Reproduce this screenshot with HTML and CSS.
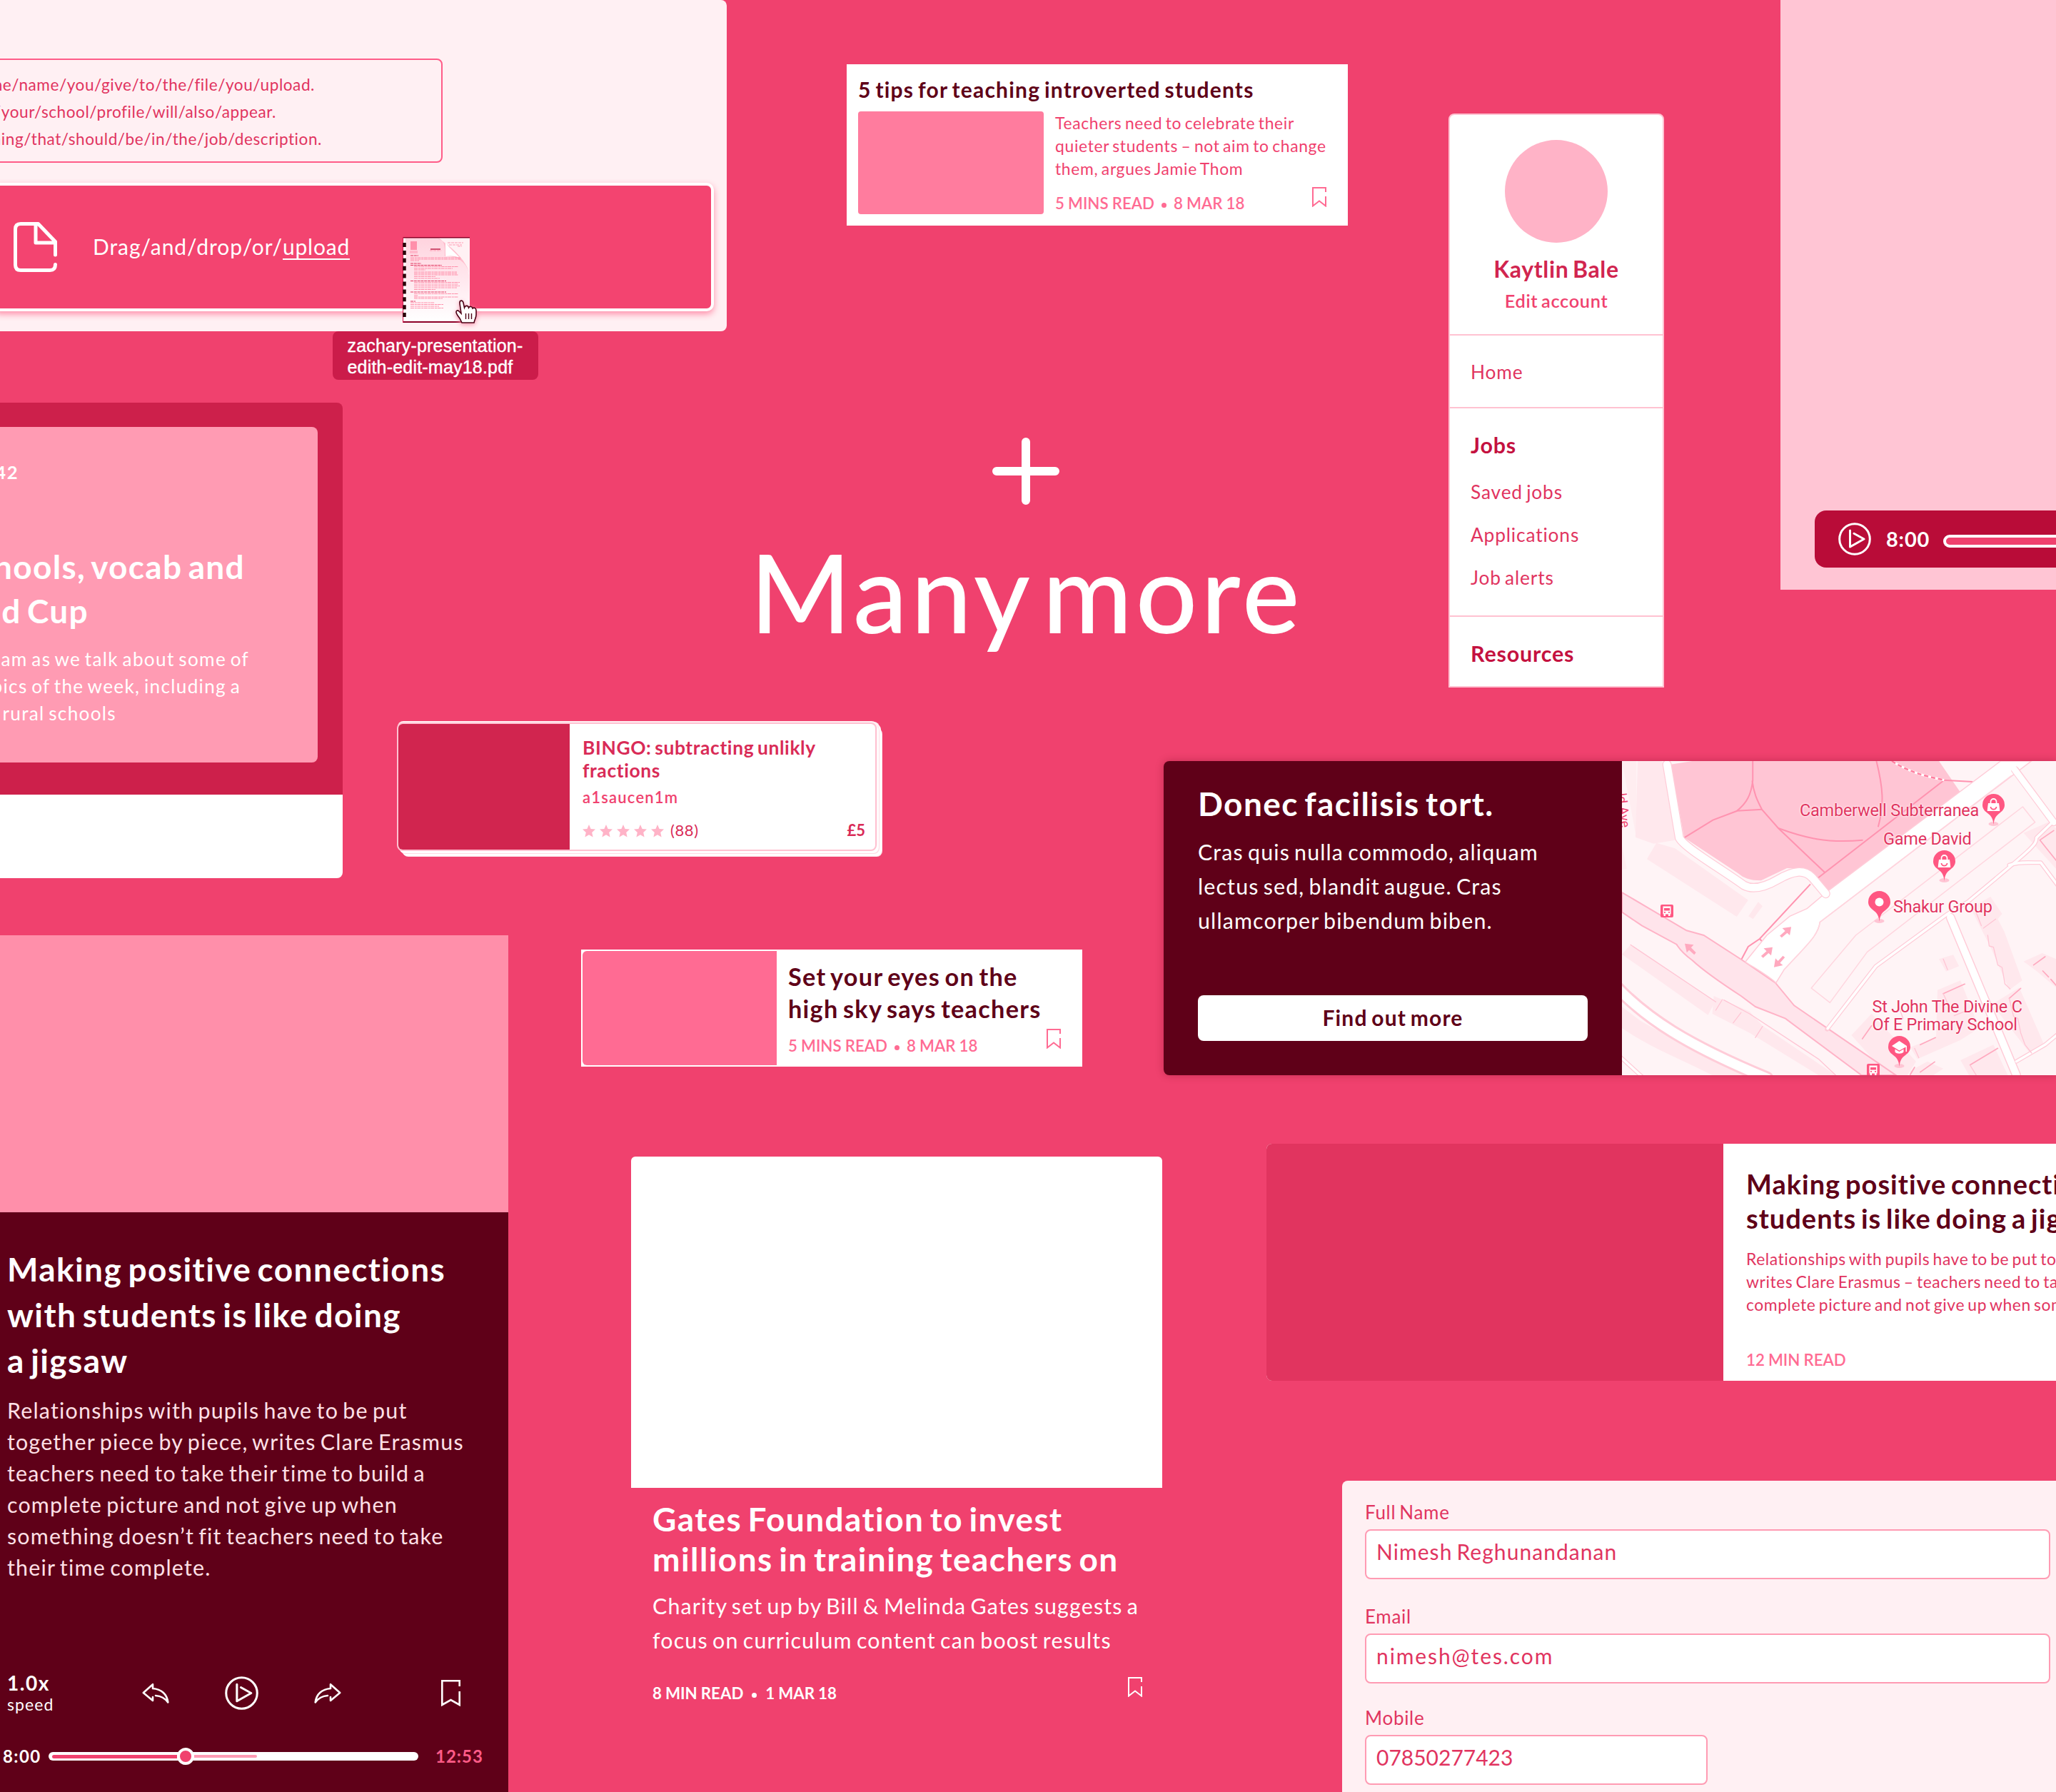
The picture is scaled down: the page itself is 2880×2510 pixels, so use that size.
FILE: index.html
```html
<!DOCTYPE html>
<html lang="en">
<head>
<meta charset="utf-8">
<title>Many more</title>
<link rel="stylesheet" href="styles.css">
</head>
<body>
<svg class="defs" aria-hidden="true">
  <symbol id="bookmark" viewBox="0 0 20 28"><path d="M19 7V1H1V26.5L10 19.5L19 26.5V13" fill="none" stroke="currentColor" stroke-width="2"/></symbol>
  <symbol id="play" viewBox="0 0 46 46"><circle cx="23" cy="23" r="21.3" fill="none" stroke="currentColor" stroke-width="3"/><path d="M16.5 11V34L36 23L22 15.2" fill="none" stroke="currentColor" stroke-width="3" stroke-linejoin="round" stroke-linecap="round"/></symbol>
  <symbol id="reply" viewBox="0 0 38 30"><path d="M15 20V25L1.8 14L15 2.2V8C27 9 35 16 36.3 27.500C32 21.500 26 18.500 19 18" fill="none" stroke="currentColor" stroke-width="2.6" stroke-linejoin="round" stroke-linecap="round"/></symbol>
  <symbol id="star" viewBox="0 0 18 18"><path d="M9 0l2.600 6 6.400.6-4.800 4.300L14.600 17.500 9 14.200 3.400 17.500 4.800 10.900 0 6.600 6.400 6z" fill="currentColor"/></symbol>
  <symbol id="pin" viewBox="0 0 31 46"><ellipse cx="15.500" cy="42" rx="7" ry="3" fill="#ffc5d4"/><path d="M15.500 43C14.500 33 11.500 30.500 6.500 26.500C2.500 23.500 0 20 0 15.500a15.500 15.500 0 0 1 31 0C31 20 28.500 23.500 24.500 26.500C19.500 30.500 16.500 33 15.500 43z" fill="#ff5782"/></symbol>
  <symbol id="bag" viewBox="0 0 18 18"><path d="M1.500 7h15L18 18H0z" fill="#fff"/><path d="M5 8V5a4 4 0 0 1 8 0v3" fill="none" stroke="#fff" stroke-width="1.800"/><path d="M5 12a4 3.600 0 0 0 8 0" fill="none" stroke="#ff5782" stroke-width="1.800"/></symbol>
  <symbol id="bus" viewBox="0 0 18 18"><rect width="18" height="18" rx="2" fill="#ff5782"/><path d="M3.500 2.500h11v11h-11z M4.500 13h2.500v3h-2.500z M11 13h2.500v3H11z" fill="#fff"/><path d="M5 5h8v3.500H5z M5 10h2v1.800H5z M11 10h2v1.800h-2z" fill="#ff5782"/></symbol>
</svg>

<main class="canvas">

  <section class="upload">
    <div class="upload-help">
      <p class="help-line help-line-a">he/name/you/give/to/the/file/you/upload.</p>
      <p class="help-line help-line-b">/your/school/profile/will/also/appear.</p>
      <p class="help-line help-line-c">hing/that/should/be/in/the/job/description.</p>
    </div>
    <div class="dropzone">
      <svg class="file-icon" viewBox="0 0 61 70"><path d="M58.500 46V27.500L34.500 2.500H10Q2.500 2.500 2.500 10V60Q2.500 67.500 10 67.500H51Q58.500 67.500 58.500 59.500M31 3V29H58.500" fill="none" stroke="#fff" stroke-width="5" stroke-linejoin="round" stroke-linecap="round"/></svg>
      <p class="drop-text">Drag/and/drop/or/<span class="drop-link">upload</span></p>
    </div>
  </section>

  <svg class="document" viewBox="0 0 94 120">
    <defs><linearGradient id="sheet" x1="0" y1="0" x2="0" y2="1"><stop offset="0" stop-color="#ffd3de"/><stop offset=".55" stop-color="#ffeaf0"/><stop offset="1" stop-color="#fff"/></linearGradient></defs>
    <path d="M0 0h94v120H0z" fill="#fff1f4"/>
    <path d="M4 1H48C58 3 60 12 60 27C76 27 90 34 93 54V118H4z" fill="url(#sheet)"/>
    <path d="M48 1C59 4 60 14 59 27C76 26 88 34 93 50C90 34 68 12 48 1z" fill="#ff9bb3" opacity=".6"/>
    <path d="M60 27V8C66 16 74 22 80 29C74 26 66 26 60 27z" fill="#fff"/>
    <path d="M11 6h9v12h-9z" fill="#ff8faa"/><path d="M10 19h11v4H10z" fill="#ffb9cb"/>
    <path d="M0 .5H94M0 119h94" stroke="#8d0027" stroke-width="2"/>
    <path d="M.5 0V120" stroke="#d91c50" stroke-width="1"/>
    <path d="M3 7V116" stroke="#fff" stroke-width="3"/>
    <path d="M2.500 8V116" stroke="#2a0008" stroke-width="4.500" stroke-dasharray="6 4.900"/>
    <path d="M63 8h22M65 11h18M77 13h6M38 19h16" stroke="#ff9bb3" stroke-width="1.200" stroke-dasharray="4 1"/>
    <path d="M39 17h14" stroke="#b90c38" stroke-width="1.300"/>
    <path d="M11 26h11M11 37h15M11 39.500h44M11 61.500h50M11 77h50M11 90h7" stroke="#e1345f" stroke-width="1" stroke-dasharray="4 .8"/>
    <path d="M11 29h70M11 31h70M11 33h12M16 41.500h62M16 44h54M16 46h16M16 49h60M16 51h60M16 53h62M16 55.500h30M16 58h36M16 63.500h64M16 66h62M16 68.500h64M16 71h60M16 73.500h30M16 79.500h62M16 82h6M16 84h62M16 86h40M11 92h34M11 94.500h46M11 97h40M11 99.500h46" stroke="#ff8faa" stroke-width="1" stroke-dasharray="5 .8 3 .6"/>
  </svg>
  <svg class="cursor" viewBox="0 0 30 33"><path d="M9 32L6 26C4 23 1 20 1 17c0-2 2-3 4-1L8 19 6 5C5.500 0 10 0 11 4L12.500 11C14 7 18 8 18.500 11C20 8.500 23.500 9 24 12C26.500 10 29 12 29 15V21C29 25 27 27 26 32z" fill="#fff" stroke="#4a0014" stroke-width="1.600"/><path d="M14.500 19v8M18.500 19v8M22.500 19v8" stroke="#4a0014" stroke-width="1.400"/></svg>
  <div class="file-label">zachary-presentation-<br>edith-edit-may18.pdf</div>

  <article class="tips">
    <h2 class="tips-title">5 tips for teaching introverted students</h2>
    <div class="tips-row">
      <div class="tips-thumb"></div>
      <div class="tips-body">
        <p class="small-copy tips-copy">Teachers need to celebrate their<br>quieter students – not aim to change<br>them, argues Jamie Thom</p>
        <div class="card-foot tips-foot">
          <p class="meta"><span>5 MINS READ</span><i class="dot"></i><span>8 MAR 18</span></p>
          <svg class="bookmark tips-bookmark"><use href="#bookmark"/></svg>
        </div>
      </div>
    </div>
  </article>

  <nav class="sidebar">
    <header class="profile">
      <div class="avatar"></div>
      <p class="profile-name">Kaytlin Bale</p>
      <p class="profile-edit">Edit account</p>
    </header>
    <div class="nav-group nav-home"><p class="nav-item nav-item-home">Home</p></div>
    <div class="nav-group nav-jobs">
      <h3 class="nav-title">Jobs</h3>
      <div class="nav-list"><p class="nav-item">Saved jobs</p><p class="nav-item">Applications</p><p class="nav-item">Job alerts</p></div>
    </div>
    <div class="nav-group nav-last"><h3 class="nav-title">Resources</h3></div>
  </nav>

  <section class="video">
    <div class="video-bar">
      <svg class="video-play"><use href="#play"/></svg>
      <span class="video-time">8:00</span>
      <div class="video-track"></div>
    </div>
  </section>

  <section class="podcast">
    <div class="podcast-inner">
      <p class="cut episode">42</p>
      <div class="podcast-title"><p class="cut pt-a">hools, vocab and</p><p class="cut pt-b">d Cup</p></div>
      <div class="podcast-copy"><p class="cut pc-a">am as we talk about some of</p><p class="cut pc-b">pics of the week, including a</p><p class="cut pc-c">rural schools</p></div>
    </div>
  </section>

  <section class="hero">
    <svg class="plus" viewBox="0 0 94 94"><path d="M47 6V88M6 47H88" stroke="#fff" stroke-width="12" stroke-linecap="round"/></svg>
    <h1 class="hero-title">Many more</h1>
  </section>

  <article class="bingo">
    <div class="bingo-image"></div>
    <div class="bingo-body">
      <h2 class="bingo-title">BINGO: subtracting unlikly<br>fractions</h2>
      <p class="bingo-author">a1saucen1m</p>
      <div class="bingo-foot">
        <div class="stars"><svg><use href="#star"/></svg><svg><use href="#star"/></svg><svg><use href="#star"/></svg><svg><use href="#star"/></svg><svg><use href="#star"/></svg></div>
        <span class="reviews">(88)</span>
        <span class="price">£5</span>
      </div>
    </div>
  </article>

  <article class="sky">
    <div class="sky-image"></div>
    <div class="sky-body">
      <h2 class="sky-title">Set your eyes on the<br>high sky says teachers</h2>
      <div class="card-foot">
        <p class="meta"><span>5 MINS READ</span><i class="dot"></i><span>8 MAR 18</span></p>
        <svg class="bookmark sky-bookmark"><use href="#bookmark"/></svg>
      </div>
    </div>
  </article>

  <article class="place">
    <div class="place-info">
      <h2 class="place-title">Donec facilisis tort.</h2>
      <p class="place-copy">Cras quis nulla commodo, aliquam<br>lectus sed, blandit augue. Cras<br>ullamcorper bibendum biben.</p>
      <div class="place-button">Find out more</div>
    </div>
    <div class="map">
      <svg class="map-art" viewBox="55 48 1513 1320" preserveAspectRatio="none">
        <rect x="55" y="48" width="1513" height="1320" fill="#fff4f6"/>
        <g fill="#ffe8ed">
          <path d="M110 48H195L240 380L165 395L102 368z"/>
          <path d="M175 392L240 415L495 632L455 702L142 460z"/>
          <path d="M530 640L545 658L512 712L496 700z"/>
          <path d="M55 860L85 820L380 1058L355 1115z"/>
          <path d="M55 1080L120 1140C250 1230 400 1300 480 1368H370C260 1300 150 1250 55 1170z"/>
          <path d="M375 1035L500 1100L545 1160L800 1368H740L500 1190L370 1110z"/>
          <path d="M55 405L72 500L55 505z M55 48h50v320z" opacity=".6"/>
          <path d="M1270 665L1340 618L1380 690L1365 712L1388 765L1450 970L1405 1010L1340 830z"/>
          <path d="M1345 1070L1440 1000L1525 1235L1480 1280z"/>
          <path d="M1155 1010L1235 970L1300 1170L1235 1220L1085 1300L1060 1250L1150 1210z"/>
          <path d="M855 1200L925 1110L1080 1310L1050 1368H980z"/>
          <path d="M1160 880L1210 862L1230 910L1185 932z"/>
          <path d="M1235 1305L1350 1240L1400 1368H1265z"/>
          <path d="M1455 890L1520 855L1568 880V1000L1500 930z"/>
          <path d="M1455 350L1540 305L1568 330V500z"/>
          <path d="M1060 1350L1120 1310L1175 1340L1140 1368H1060z"/>
        </g>
        <path d="M225 62L300 48H1160L1235 180L775 592L730 545L690 500L630 498L540 550C500 550 480 540 460 520L272 370z" fill="#ffc5d4"/>
        <g fill="none" stroke="#ff93b0" stroke-width="2">
          <path d="M511 48V130C505 190 490 225 455 258L372 296L272 370"/>
          <path d="M509 130C515 190 530 220 543 252L600 330L762 516"/>
          <path d="M455 257L543 251"/>
          <path d="M600 330C690 370 770 395 895 380"/>
          <path d="M942 48C965 160 970 230 948 325"/>
          <path d="M1278 135L1178 128L735 542"/>
          <path d="M712 565L535 795L495 828L470 885M535 795L548 812"/>
          <path d="M995 48C1060 95 1100 108 1178 128" stroke="#fff" stroke-width="3"/>
          <path d="M995 48C1060 95 1100 108 1178 128" stroke="#ff7c9e" stroke-dasharray="6 4" stroke-width="2.500"/>
        </g>
        <path d="M55 600L280 760L340 780L475 885L590 980L655 1075L1010 1368H890L625 1130L520 1080L470 1035C400 980 340 930 300 885C260 850 255 835 245 818L125 740L55 683z" fill="#ffe4eb" stroke="#ffb3c7" stroke-width="2"/>
        <path d="M485 892L560 780L640 700L700 668L755 612L775 592L1375 48H1482L745 725C740 780 700 820 620 925L592 980C560 945 520 920 485 892z" fill="#fff" stroke="#ffccd8" stroke-width="1.500"/>
        <g fill="none" stroke-linecap="round" stroke-linejoin="round">
          <g stroke="#ffccd8">
            <path d="M212 62L255 370C270 410 400 500 480 570C510 590 550 580 600 545C650 510 690 500 720 540L765 605" stroke-width="13"/>
            <path d="M1560 300L1500 370C1500 400 1490 410 1260 640L1190 690L940 910L770 1175" stroke-width="6"/>
            <path d="M1200 705L1430 1368" stroke-width="13"/>
            <path d="M1425 85L1560 305" stroke-width="11"/>
            <path d="M1405 485C1440 470 1480 475 1515 475L1580 580" stroke-width="6"/>
            <path d="M1430 1310L1530 1240L1580 1190" stroke-width="6"/>
            <path d="M30 990C140 1130 280 1240 560 1380" stroke-width="19"/>
            <path d="M30 1270L130 1380" stroke-width="6"/>
          </g>
          <g stroke="#fff">
            <path d="M212 62L255 370C270 410 400 500 480 570C510 590 550 580 600 545C650 510 690 500 720 540L765 605" stroke-width="10.500"/>
            <path d="M1560 300L1500 370C1500 400 1490 410 1260 640L1190 690L940 910L772 1172" stroke-width="3.500"/>
            <path d="M1200 705L1430 1368" stroke-width="10"/>
            <path d="M1415 70L1560 305" stroke-width="8.500"/>
            <path d="M1405 485C1440 470 1480 475 1515 475L1580 580" stroke-width="3.500"/>
            <path d="M1430 1310L1530 1240L1580 1190" stroke-width="3.500"/>
            <path d="M30 990C140 1130 280 1240 560 1380" stroke-width="13"/>
            <path d="M30 1270L130 1380" stroke-width="3.500"/>
          </g>
          <path d="M1412 110L745 725C740 780 700 820 620 925M1452 240L870 780L715 1002L780 1063L910 850L1495 305z" stroke="#ffd6df" stroke-width="1.500"/>
          <path d="M1560 340L1512 380L1575 475M1490 905L1530 870M1522 930L1542 955M1550 965L1568 990M1175 1025L1250 985M1095 1240L1148 1210M1405 1045L1445 1003M1268 1325L1365 1255M893 1215L925 1160M1060 1365L1075 1335M1095 1355L1145 1312" stroke="#ffa9bf" stroke-width="1.700"/>
          <path d="M1285 670L1308 740M1315 750L1358 712M1330 780L1335 825L1350 830L1365 905L1380 915L1390 985L1408 1005M1405 1045L1420 1120L1435 1130L1445 1190L1460 1240L1483 1275M1175 880L1190 925M1175 1025L1190 1065M1213 1118L1250 1100M1020 1080L1035 1130M1075 1255L1090 1295M1268 1325L1290 1368M405 1050L382 1095M470 1105L443 1148M545 1163L520 1210M85 820L382 1060M410 1052L500 1110L740 1300L800 1368" stroke="#ffc5d4" stroke-width="1.300"/>
        </g>
        <g fill="#ffa9bf">
          <path d="M645 745L640 780L631 770L612 790L605 782L624 762L614 750z"/>
          <path d="M580 830L575 865L566 855L547 875L540 867L559 847L549 835z"/>
          <path d="M585 914L590 877L599 888L616 866L623 873L606 896L616 906z"/>
          <path d="M274 815L305 820L296 832L313 853L307 862L289 842L281 853z"/>
        </g>
      </svg>
      <span class="street">ld Ave</span>
      <svg class="bus bus-a"><use href="#bus"/></svg>
      <svg class="bus bus-b"><use href="#bus"/></svg>
      <span class="map-label label-a">Camberwell Subterranea</span>
      <svg class="pin pin-a" viewBox="0 0 31 46"><use href="#pin" width="31" height="46"/><use href="#bag" x="6.500" y="6" width="18" height="18"/></svg>
      <span class="map-label label-b">Game David</span>
      <svg class="pin pin-b" viewBox="0 0 31 46"><use href="#pin" width="31" height="46"/><use href="#bag" x="6.500" y="6" width="18" height="18"/></svg>
      <span class="map-label label-c">Shakur Group</span>
      <svg class="pin pin-c" viewBox="0 0 31 46"><use href="#pin" width="31" height="46"/><circle cx="15.500" cy="15.500" r="6" fill="#fff"/></svg>
      <span class="map-label label-d">St John The Divine C<br>Of E Primary School</span>
      <svg class="pin pin-d" viewBox="0 0 31 46"><use href="#pin" width="31" height="46"/><path d="M15.500 7L26 14V22H24.500V15.500L15.500 20.500L5 14z M9.500 18.500L15.500 22L21.500 18.500V22.500C19 25.500 12 25.500 9.500 22.500z" fill="#fff"/></svg>
    </div>
  </article>

  <article class="player">
    <div class="player-image"></div>
    <div class="player-body">
      <h2 class="player-title">Making positive connections<br>with students is like doing<br>a jigsaw</h2>
      <p class="player-copy">Relationships with pupils have to be put<br>together piece by piece, writes Clare Erasmus<br>teachers need to take their time to build a<br>complete picture and not give up when<br>something doesn’t fit teachers need to take<br>their time complete.</p>
      <div class="controls">
        <div class="speed"><p class="speed-value">1.0x</p><p class="speed-name">speed</p></div>
        <svg class="skip"><use href="#reply"/></svg>
        <svg class="player-play"><use href="#play"/></svg>
        <svg class="skip skip-forward"><use href="#reply"/></svg>
        <svg class="player-bookmark" viewBox="0 0 27 37"><path d="M25.700 9V1.300H1.300V35L13.500 28L25.700 35V16" fill="none" stroke="#fff" stroke-width="2.600"/></svg>
      </div>
      <div class="progress">
        <span class="elapsed">8:00</span>
        <div class="track"><div class="played"></div><div class="knob"></div><div class="buffered"></div></div>
        <span class="total">12:53</span>
      </div>
    </div>
  </article>

  <article class="gates">
    <div class="gates-image"></div>
    <div class="gates-body">
      <h2 class="gates-title">Gates Foundation to invest<br>millions in training teachers on</h2>
      <p class="gates-copy">Charity set up by Bill &amp; Melinda Gates suggests a<br>focus on curriculum content can boost results</p>
      <div class="card-foot gates-foot">
        <p class="meta gates-meta"><span>8 MIN READ</span><i class="dot"></i><span>1 MAR 18</span></p>
        <svg class="bookmark gates-bookmark"><use href="#bookmark"/></svg>
      </div>
    </div>
  </article>

  <article class="jigsaw">
    <div class="jigsaw-image"></div>
    <div class="jigsaw-body">
      <h2 class="jigsaw-title">Making positive connections with<br>students is like doing a jigsaw</h2>
      <p class="small-copy jigsaw-copy">Relationships with pupils have to be put together<br>writes Clare Erasmus – teachers need to take their<br>complete picture and not give up when something</p>
      <p class="meta jigsaw-meta">12 MIN READ</p>
    </div>
  </article>

  <section class="form">
    <div class="field"><p class="field-label">Full Name</p><div class="field-box">Nimesh Reghunandanan</div></div>
    <div class="field field-email"><p class="field-label">Email</p><div class="field-box">nimesh@tes.com</div></div>
    <div class="field field-mobile"><p class="field-label">Mobile</p><div class="field-box">07850277423</div></div>
  </section>

</main>
</body>
</html>
```
FILE: styles.css
```css
* { box-sizing: border-box; }
body { margin: 0; background: #f0416e; font-family: Lato, "Open Sans", sans-serif; }
p, h1, h2, h3 { margin: 0; font-weight: 400; word-spacing: -.09em; }
svg { display: block; }
.defs { position: absolute; width: 0; height: 0; }

/* Free canvas: each card is pinned, its contents flow */
.canvas { position: relative; width: 2880px; height: 2510px; overflow: hidden; background: #f0416e; white-space: nowrap; }

/* Shared pieces */
.small-copy { font-size: 22.9px; line-height: 32px; }
.meta { display: flex; align-items: center; gap: 10px; font-size: 22.3px; font-weight: 600; line-height: 30px; word-spacing: -.02em; color: #ff6b93; }
.dot { width: 7px; height: 7px; margin-top: 4px; border-radius: 50%; background: currentColor; }
.card-foot { display: flex; justify-content: space-between; align-items: flex-start; color: #ff6b93; }
.bookmark { width: 20px; height: 28px; flex: none; }
.cut { display: flex; justify-content: flex-end; }

/* Upload panel */
.upload { position: absolute; left: 0; top: 0; width: 1018px; height: 464px; padding-top: 82px; border-radius: 0 8px 8px 0; background: #fff0f3; }
.upload-help { width: 630px; height: 146px; margin-left: -10px; padding: 16px 0 0 8px; border: 2px solid #ff5c88; border-radius: 8px; }
.help-line { display: flex; justify-content: flex-end; font-size: 22.6px; line-height: 38px; letter-spacing: .55px; color: #e1345f; }
.help-line-a { width: 441px; }
.help-line-b { width: 387px; }
.help-line-c { width: 451px; }
.dropzone { display: flex; align-items: center; gap: 50px; width: 1010px; height: 180px; margin: 28px 0 0 -10px; padding-left: 25px; border: 4px solid #fff; border-radius: 10px; background: #f34470; box-shadow: 0 4px 10px #ff8faa; }
.file-icon { width: 61px; height: 70px; overflow: visible; }
.drop-text { margin-top: -2px; font-size: 30px; line-height: 40px; letter-spacing: .95px; color: #fff; }
.drop-link { border-bottom: 2px solid #fff; display: inline-block; line-height: 33px; letter-spacing: .8px; }
.document { position: absolute; left: 564px; top: 332px; width: 94px; height: 120px; }
.cursor { position: absolute; left: 638px; top: 420px; width: 30px; height: 33px; filter: drop-shadow(0 2px 3px #ff8faa); }
.file-label { position: absolute; left: 466px; top: 464px; width: 288px; height: 68px; padding: 5px 0 0 20.500px; border-radius: 8px; background: #cb1c4a; color: #fff; font: 25px/30px "Liberation Sans", sans-serif; letter-spacing: .2px; -webkit-text-stroke: .4px #fff; }

/* Tips card */
.tips { position: absolute; left: 1186px; top: 90px; width: 702px; height: 226px; padding: 17px 30px 0 16px; background: #fff; }
.tips-title { font-size: 30px; font-weight: 700; line-height: 36px; letter-spacing: 1.2px; color: #5f0018; }
.tips-row { display: flex; gap: 16px; margin-top: 13px; }
.tips-thumb { width: 260px; height: 144px; border-radius: 4px; background: #ff7c9e; }
.tips-body { flex: 1; }
.tips-copy { letter-spacing: .66px; color: #f0416e; }
.tips-foot { margin-top: 18px; }
.tips-bookmark { margin-top: -8px; }

/* Account sidebar */
.sidebar { position: absolute; left: 2029px; top: 159px; width: 302px; height: 804px; border: 2px solid #ffc2d1; border-radius: 8px 8px 0 0; background: #fff; }
.profile { display: flex; flex-direction: column; align-items: center; height: 309px; padding-top: 35px; border-bottom: 2px solid #ffc2d1; }
.avatar { width: 144px; height: 144px; border-radius: 50%; background: #ffb3c7; }
.profile-name { margin-top: 17px; font-size: 32px; font-weight: 700; line-height: 40px; letter-spacing: .65px; color: #d1254f; }
.profile-edit { margin-top: 9px; font-size: 25.3px; font-weight: 600; line-height: 30px; letter-spacing: .7px; color: #f0416e; }
.nav-group { padding: 33px 0 0 29px; border-bottom: 2px solid #ffc2d1; }
.nav-home { height: 102px; }
.nav-jobs { height: 292px; }
.nav-last { border-bottom: 0; }
.nav-title { font-size: 30.5px; font-weight: 700; line-height: 36px; letter-spacing: .8px; color: #c4113f; }
.nav-list { margin-top: 18px; }
.nav-item { font-size: 26.3px; line-height: 60px; letter-spacing: .85px; color: #e1345f; }
.nav-item-home { margin-top: -12px; }

/* Video */
.video { position: absolute; left: 2494px; top: 0; width: 386px; height: 826px; padding: 715px 0 0 48px; overflow: hidden; background: #ffc5d4; }
.video-bar { display: flex; align-items: center; width: 420px; height: 80px; padding-left: 33px; border-radius: 16px; background: #b90c38; color: #fff; }
.video-play { width: 46px; height: 46px; }
.video-time { width: 80px; margin-left: 21px; font-size: 29px; font-weight: 700; letter-spacing: .8px; line-height: 36px; }
.video-track { flex: 1; height: 18px; margin-top: 5px; border: 4px solid #fff; border-radius: 9px; background: #f0416e; }

/* Podcast */
.podcast { position: absolute; left: 0; top: 564px; width: 480px; height: 666px; padding-top: 34px; border-radius: 0 8px 8px 0; background: linear-gradient(#cd204b 549.500px, #fff 549.500px); color: #fff; }
.podcast-inner { width: 445px; height: 470px; padding-top: 44px; border-radius: 0 8px 8px 0; background: #ff9bb3; }
.episode { width: 26px; font-size: 25.6px; font-weight: 700; line-height: 38px; letter-spacing: 1.5px; }
.podcast-title { margin-top: 83px; font-size: 46px; line-height: 62px; letter-spacing: 1.3px; }
.podcast-title .cut { font-weight: 700; }
.pt-a { width: 343px; }
.pt-b { width: 124px; }
.podcast-copy { margin-top: 17px; font-size: 26.2px; line-height: 38px; letter-spacing: 1.3px; }
.pc-a { width: 349px; }
.pc-b { width: 337px; }
.pc-c { width: 163px; }

/* Hero */
.hero { position: absolute; left: 1038px; top: 613px; width: 800px; display: flex; flex-direction: column; align-items: center; gap: 41px; color: #fff; }
.plus { width: 94px; height: 94px; margin-right: 2px; }
.hero-title { font-size: 152px; font-weight: 500; line-height: 160px; letter-spacing: 5px; word-spacing: -.18em; }

/* Bingo resource, stacked sheets */
.bingo { position: absolute; left: 556px; top: 1012px; width: 672px; height: 180px; display: flex; border: 2px solid #ffc2d1; border-radius: 8px; background: #fff; box-shadow: 1px -2px 0 0 #fff0f3, 3px 3px 0 0 #fff, 4px 4px 0 0 #ffdbe4, 4px -1px 0 0 #fff0f3, 6px 2px 0 0 #fff, 7px 7px 0 0 #fff, 8px 8px 0 0 #ffe6ec; }
.bingo-image { width: 240px; border-radius: 6px 0 0 6px; background: #d1254f; }
.bingo-body { flex: 1; padding: 17px 14px 0 18px; color: #d92b57; }
.bingo-title { font-size: 26.4px; font-weight: 700; line-height: 32px; letter-spacing: .62px; }
.bingo-author { margin-top: 8px; font-size: 22px; font-weight: 600; line-height: 28px; letter-spacing: 1.2px; color: #f0416e; }
.bingo-foot { display: flex; align-items: center; margin-top: 17px; font-size: 22px; line-height: 30px; }
.stars { display: flex; gap: 6px; padding-top: 2px; color: #ffb3c7; }
.stars svg { width: 18px; height: 18px; }
.reviews { margin-left: 9px; letter-spacing: .6px; }
.price { margin-left: auto; font-weight: 700; }

/* Sky article */
.sky { position: absolute; left: 814px; top: 1330px; width: 702px; height: 164px; display: flex; padding: 2px; background: #fff; }
.sky-image { width: 272px; border-radius: 6px 0 0 6px; background: #ff6b93; }
.sky-body { flex: 1; padding: 14px 28px 0 16px; }
.sky-title { font-size: 34.3px; font-weight: 700; line-height: 44.5px; letter-spacing: 1.25px; color: #5f0018; }
.sky .card-foot { margin-top: 15px; }
.sky-bookmark { margin-top: -9px; }

/* Place card with map */
.place { position: absolute; left: 1630px; top: 1066px; width: 1250px; height: 440px; display: flex; border-radius: 8px 0 0 8px; box-shadow: 0 0 12px rgba(95, 0, 24, .3); }
.place-info { width: 642px; padding: 32px 48px 0; border-radius: 8px 0 0 8px; background: #5f0018; color: #fff; }
.place-title { font-size: 46px; font-weight: 700; line-height: 56px; letter-spacing: 1.4px; }
.place-copy { margin-top: 15px; font-size: 30.4px; line-height: 48px; letter-spacing: 1.13px; }
.place-button { height: 64px; margin-top: 81px; border-radius: 8px; background: #fff; color: #5f0018; font-size: 30px; font-weight: 700; line-height: 62px; letter-spacing: 1.15px; word-spacing: -.09em; text-align: center; }
.map { position: relative; width: 608px; height: 440px; overflow: hidden; }
.map-art { width: 608px; height: 440px; }
.map-art path { vector-effect: non-scaling-stroke; }
.map-label { position: absolute; font: 23.5px/25px Roboto, sans-serif; letter-spacing: -.25px; color: #e1345f; text-shadow: 0 0 3px #fff, 0 0 2px #fff; }
.label-a { left: 249px; top: 57px; }
.label-b { left: 366px; top: 97px; }
.label-c { left: 380px; top: 192px; }
.label-d { left: 350.500px; top: 332px; }
.pin { position: absolute; width: 31px; height: 46px; overflow: visible; }
.pin-a { left: 505px; top: 46px; }
.pin-b { left: 436px; top: 125px; }
.pin-c { left: 345px; top: 182px; }
.pin-d { left: 373px; top: 385px; }
.bus { position: absolute; width: 18px; height: 18px; }
.bus-a { left: 54px; top: 201px; }
.bus-b { left: 343px; top: 424px; }
.street { position: absolute; left: -22px; top: 60px; font: 18px/18px Roboto, sans-serif; color: #f0416e; transform: rotate(83deg); }

/* Audio player */
.player { position: absolute; left: 0; top: 1310px; width: 712px; height: 1200px; background: #5f0018; color: #fff; }
.player-image { height: 388px; background: #ff8faa; }
.player-body { padding: 48px 0 0 9px; }
.player-title { padding-left: 1px; font-size: 46px; font-weight: 700; line-height: 64px; letter-spacing: 1.4px; }
.player-copy { margin-top: 15px; padding-left: 1px; font-size: 30.4px; line-height: 44px; letter-spacing: 1.2px; color: #ffe0e7; }
.controls { display: flex; align-items: center; margin-top: 124px; }
.speed { width: 190px; padding-left: 1px; }
.speed-value { font-size: 28px; font-weight: 700; line-height: 32px; letter-spacing: 1.5px; }
.speed-name { font-size: 23px; line-height: 29px; letter-spacing: 1.1px; }
.skip { width: 38px; height: 30px; }
.player-play { width: 47px; height: 47px; margin: 0 78px; }
.skip-forward { transform: scaleX(-1); }
.player-bookmark { width: 27px; height: 37px; margin-left: 140px; }
.progress { display: flex; align-items: center; margin: 43px 0 0 -6px; font-size: 24px; font-weight: 700; line-height: 30px; }
.elapsed { width: 65px; letter-spacing: 1.4px; padding-left: 1px; }
.track { display: flex; align-items: center; width: 518px; height: 12px; padding-left: 5px; border-radius: 6px; background: #fff; }
.played { width: 175px; height: 5px; border-radius: 3px 0 0 3px; background: #f0416e; }
.knob { width: 24px; height: 24px; border: 4px solid #fff; border-radius: 50%; background: #f0416e; }
.buffered { width: 88px; height: 4px; border-radius: 0 2px 2px 0; background: #ff9bb3; }
.total { margin-left: 24px; letter-spacing: 1px; color: #ff5c88; }

/* Gates article */
.gates { position: absolute; left: 884px; top: 1620px; width: 744px; color: #fff; }
.gates-image { height: 464px; border-radius: 6px 6px 0 0; background: #fff; }
.gates-body { padding: 16px 28px 0 30px; }
.gates-title { font-size: 46px; font-weight: 700; line-height: 56px; letter-spacing: 1.42px; }
.gates-copy { margin-top: 13px; font-size: 30.4px; line-height: 48px; letter-spacing: 1.16px; }
.gates-foot { margin-top: 36px; color: #fff; }
.gates-meta { color: #fff; gap: 12px; font-weight: 700; }
.gates-bookmark { margin-top: -8px; }

/* Jigsaw article */
.jigsaw { position: absolute; left: 1774px; top: 1602px; width: 1106px; height: 332px; display: flex; overflow: hidden; border-radius: 8px 0 0 8px; background: #fff; }
.jigsaw-image { flex: none; width: 640px; background: #e1345f; }
.jigsaw-body { padding: 32px 0 0 32px; }
.jigsaw-title { font-size: 38px; font-weight: 700; line-height: 48px; letter-spacing: 1px; color: #5f0018; }
.jigsaw-copy { margin-top: 17px; letter-spacing: .55px; color: #e1345f; }
.jigsaw-meta { margin-top: 47px; }

/* Form */
.form { position: absolute; left: 1880px; top: 2074px; width: 1000px; height: 436px; padding: 29px 0 0 32px; border-radius: 8px 0 0 0; background: #fff0f3; color: #e1345f; }
.field { margin-bottom: 37px; }
.field-label { font-size: 26px; line-height: 30px; letter-spacing: .7px; }
.field-box { width: 960px; height: 70px; margin-top: 9px; padding-left: 14px; border: 2px solid #ff9bb3; border-radius: 8px; background: #fff; font-size: 30px; line-height: 58px; letter-spacing: 1.05px; word-spacing: -.09em; }
.field-email { margin-bottom: 33px; }
.field-email .field-box { letter-spacing: 1.9px; }
.field-mobile .field-box { width: 480px; letter-spacing: 0; }
```
